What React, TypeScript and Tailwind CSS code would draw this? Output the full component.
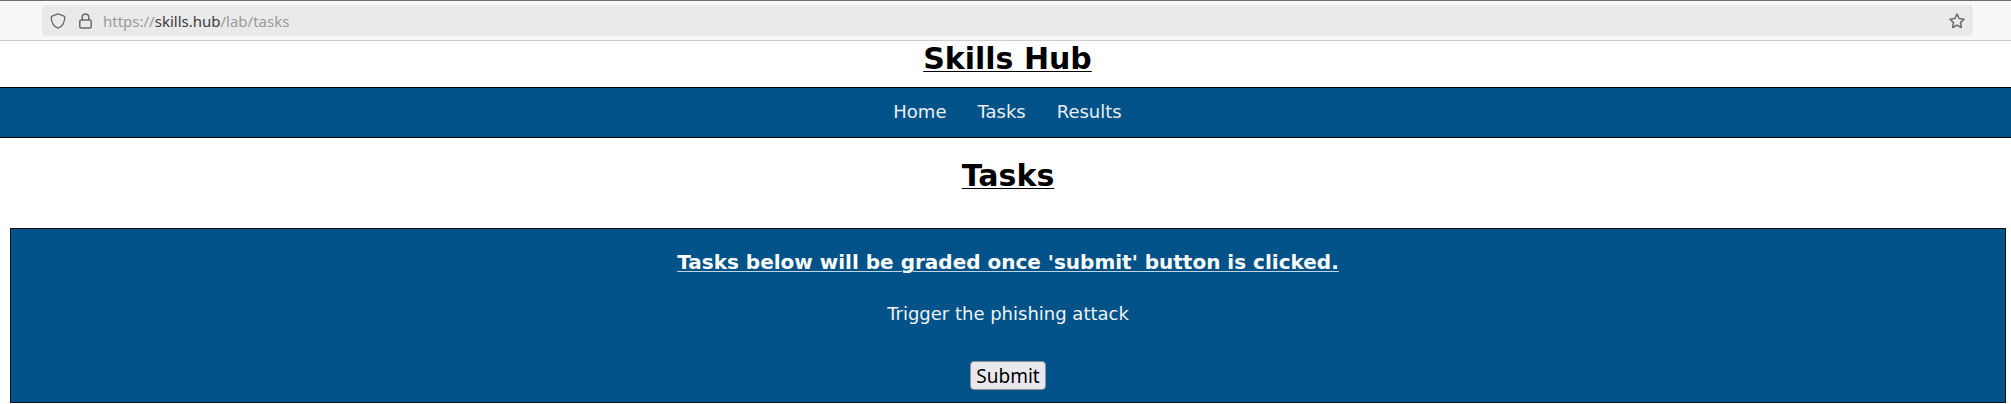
const links = ["Home", "Tasks", "Results"];

function AddressBar() {
  return (
    <header className="flex h-[41px] items-center border-t border-b border-t-[#6f6d72] border-b-[#cccccc] bg-[#f8f8f9] pr-[38px] pl-[42px]">
      <div className="flex h-[31px] w-full items-center rounded-[4px] bg-[#eaeaea] px-2 text-[#6a6a6a]">
        <svg className="size-4 shrink-0" viewBox="0 0 16 16" fill="none" stroke="currentColor" strokeWidth="1.3" strokeLinejoin="round" aria-hidden="true">
          <path d="M8 .9 14 3.2c.5.2.8.5.8 1C14.600 9.800 12 13.600 8 15.200 4 13.600 1.400 9.800 1.200 4.200c0-.5.300-.8.800-1z" />
        </svg>
        <svg className="ml-3 size-4 shrink-0" viewBox="0 0 16 16" fill="none" stroke="currentColor" strokeWidth="1.5" aria-hidden="true">
          <rect x="1.800" y="7" width="11.400" height="8" rx="1.500" />
          <path d="M4.200 7V4.200a3.300 3.300 0 0 1 6.600 0V7" />
        </svg>
        <p className="ml-[9px] flex-1 font-['Noto_Sans',sans-serif] text-[15px] leading-5 text-[#9a9a9a]">
          https://<span className="text-[#3a3a3a]">skills.hub</span>/lab/tasks
        </p>
        <button type="button" aria-label="Bookmark this page">
          <svg className="block size-4" viewBox="0 0 16 16" fill="none" stroke="currentColor" strokeWidth="1.500" strokeLinejoin="round" aria-hidden="true">
            <path d="m8 1.100 2.100 4.400 4.900.7-3.500 3.400.8 4.900L8 12.200l-4.300 2.300.8-4.900L1 6.200l4.900-.7z" />
          </svg>
        </button>
      </div>
    </header>
  );
}

export default function App() {
  return (
    <div className="bg-white font-['DejaVu_Sans',sans-serif] text-lg text-black">
      <AddressBar />
      <h1 className="flex h-[46px] justify-center pl-1 text-[30px] leading-9 font-bold">
        <span className="underline decoration-1 underline-offset-2">Skills Hub</span>
      </h1>
      <nav className="flex h-[51px] items-center justify-center gap-[31px] border-y border-black bg-[#005288] pb-px pl-1 text-[#e9eef2]">
        {links.map((label) => (
          <a key={label} href={"#" + label.toLowerCase()}>{label}</a>
        ))}
      </nav>
      <main className="pr-[5px] pl-[10px]">
        <h2 className="pt-5 pb-[18px] text-center text-[30px] leading-9 font-bold underline decoration-1 underline-offset-2">Tasks</h2>
        <form className="mt-4 flex flex-col items-center border border-[#0a1420] bg-[#005288] pt-5 pb-3 text-white" onSubmit={(e) => e.preventDefault()}>
          <h3 className="text-[20px] leading-[26px] font-bold underline decoration-[#c0d4e2] decoration-1 underline-offset-2">Tasks below will be graded once 'submit' button is clicked.</h3>
          <p className="mt-[27px] leading-6 text-[#f0f4f7]">Trigger the phishing attack</p>
          <button type="submit" className="mt-[35px] h-[29px] rounded-[4px] border border-[#8f8f9d] bg-[#e9e9ed] px-[5px] font-['Noto_Sans',sans-serif] text-[19px] leading-6 text-black">Submit</button>
        </form>
      </main>
    </div>
  );
}
